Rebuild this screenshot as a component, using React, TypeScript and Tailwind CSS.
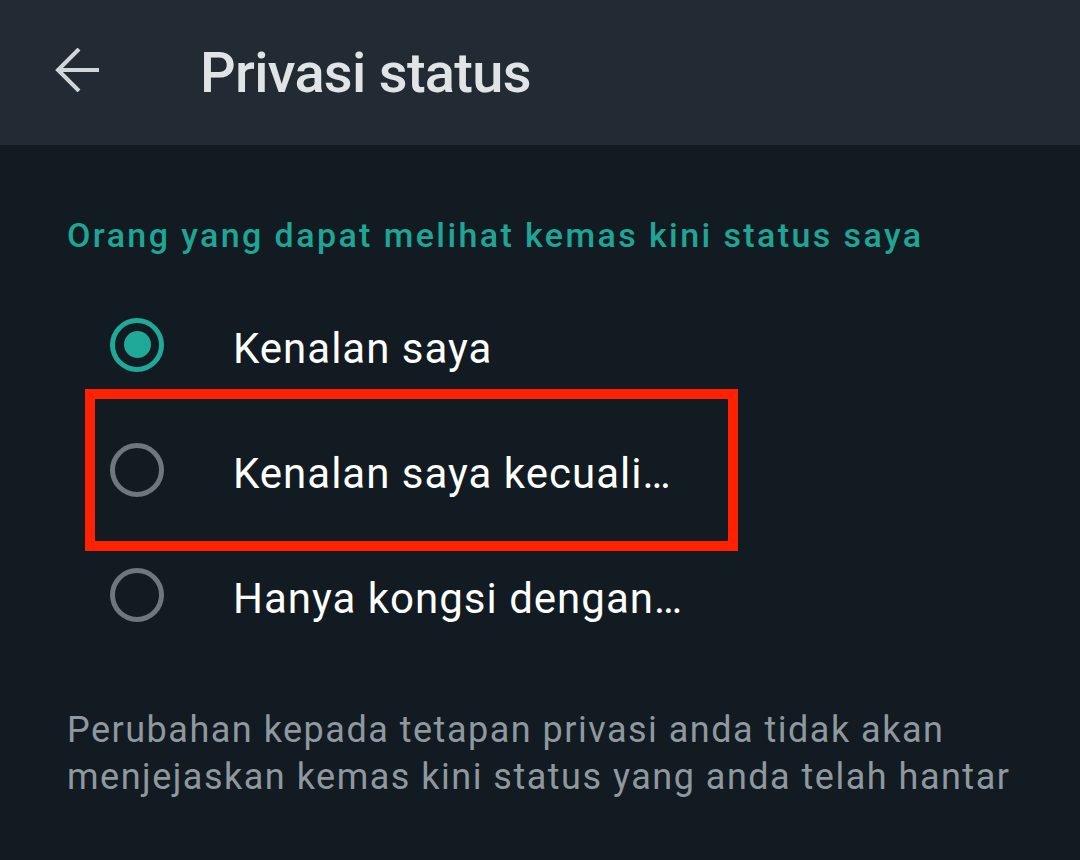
import React from "react";

const options = [
  { label: "Kenalan saya", checked: true, marked: false },
  { label: "Kenalan saya kecuali…", checked: false, marked: true },
  { label: "Hanya kongsi dengan…", checked: false, marked: false },
];

const Radio = ({ checked }: { checked: boolean }) =>
  checked ? (
    <span className="flex h-[54px] w-[54px] items-center justify-center rounded-full border-[5px] border-[#1fa999]">
      <span className="h-[27px] w-[27px] rounded-full bg-[#1fa999]" />
    </span>
  ) : (
    <span className="h-[54px] w-[54px] rounded-full border-[5px] border-[#6f777c]" />
  );

export default function App() {
  return (
    <div className="flex h-[860px] w-[1080px] flex-col bg-[#121b22] font-['Roboto',sans-serif]">
      <header className="flex h-[145px] items-center bg-[#222b34] pl-[55px]">
        <svg width="44" height="44" viewBox="0 0 44 44" className="mt-[-6px] text-[#d3d6d8]">
          <path d="M3 22H44M24 1L3 22l21 21" fill="none" stroke="currentColor" strokeWidth="4" />
        </svg>
        <h1 className="ml-[101px] text-[56px] font-medium leading-[64px] tracking-[-0.7px] text-[#e1e4e6]">
          Privasi status
        </h1>
      </header>

      <main className="flex flex-col">
        <h2 className="mt-[70px] pl-[67px] text-[34px] font-medium leading-[40px] tracking-[2.4px] text-[#1fa596]">
          Orang yang dapat melihat kemas kini status saya
        </h2>

        <div className="mt-[27px] flex flex-col">
          {options.map((o) => (
            <div key={o.label} className="relative flex h-[125px] items-center pl-[110px]">
              {o.marked && (
                <span className="pointer-events-none absolute left-[85px] top-[-18px] h-[162px] w-[653px] border-[10px] border-[#ff2100]" />
              )}
              <Radio checked={o.checked} />
              <span className="ml-[69px] mt-[7px] text-[42px] tracking-[1px] text-white">{o.label}</span>
            </div>
          ))}
        </div>

        <p className="mt-[50px] px-[67px] text-[36px] leading-[47px] tracking-[1.5px] text-[#8f989e]">
          Perubahan kepada tetapan privasi anda tidak akan menjejaskan kemas kini status yang anda telah hantar
        </p>
      </main>
    </div>
  );
}
